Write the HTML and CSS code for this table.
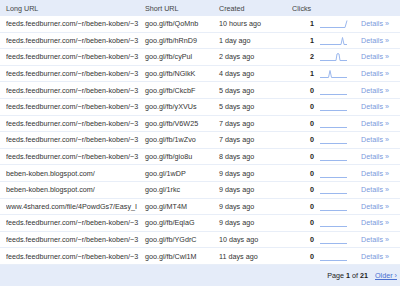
FILE: index.html
```html
<!DOCTYPE html>
<html lang="en">
<head>
    <meta charset="UTF-8">
    <title>URL history</title>
    <link rel="stylesheet" href="styles.css">
</head>
<body>
    <div class="history">
        <div class="row head">
            <span>Long URL</span>
            <span>Short URL</span>
            <span>Created</span>
            <span class="clicks">Clicks</span>
            <span></span>
            <span></span>
        </div>

        <div class="row">
            <span class="long">feeds.feedburner.com/~r/beben-koben/~3</span>
            <span>goo.gl/fb/QoMnb</span>
            <span>10 hours ago</span>
            <span class="clicks num">1</span>
            <svg class="spark" viewBox="0 0 28 8"><polyline points="0,7.5 25,7.5 27,0.5"/></svg>
            <a class="details" href="#">Details &raquo;</a>
        </div>
        <div class="row">
            <span class="long">feeds.feedburner.com/~r/beben-koben/~3</span>
            <span>goo.gl/fb/hRnD9</span>
            <span>1 day ago</span>
            <span class="clicks num">1</span>
            <svg class="spark" viewBox="0 0 28 8"><polyline points="0,7.5 21,7.5 22.5,0.5 24,7.5 27,7.5"/></svg>
            <a class="details" href="#">Details &raquo;</a>
        </div>
        <div class="row">
            <span class="long">feeds.feedburner.com/~r/beben-koben/~3</span>
            <span>goo.gl/fb/cyPul</span>
            <span>2 days ago</span>
            <span class="clicks num">2</span>
            <svg class="spark" viewBox="0 0 28 8"><polyline points="0,7.5 16,7.5 17,1 18,0.5 19,1 20,7.5 27,7.5"/></svg>
            <a class="details" href="#">Details &raquo;</a>
        </div>
        <div class="row">
            <span class="long">feeds.feedburner.com/~r/beben-koben/~3</span>
            <span>goo.gl/fb/NGlkK</span>
            <span>4 days ago</span>
            <span class="clicks num">1</span>
            <svg class="spark" viewBox="0 0 28 8"><polyline points="0,7.5 8.5,7.5 10,0.5 11.5,7.5 27,7.5"/></svg>
            <a class="details" href="#">Details &raquo;</a>
        </div>
        <div class="row">
            <span class="long">feeds.feedburner.com/~r/beben-koben/~3</span>
            <span>goo.gl/fb/CkcbF</span>
            <span>5 days ago</span>
            <span class="clicks num">0</span>
            <svg class="spark" viewBox="0 0 28 8"><polyline points="0,7.5 27,7.5"/></svg>
            <a class="details" href="#">Details &raquo;</a>
        </div>
        <div class="row">
            <span class="long">feeds.feedburner.com/~r/beben-koben/~3</span>
            <span>goo.gl/fb/yXVUs</span>
            <span>5 days ago</span>
            <span class="clicks num">0</span>
            <svg class="spark" viewBox="0 0 28 8"><polyline points="0,7.5 27,7.5"/></svg>
            <a class="details" href="#">Details &raquo;</a>
        </div>
        <div class="row">
            <span class="long">feeds.feedburner.com/~r/beben-koben/~3</span>
            <span>goo.gl/fb/V6W25</span>
            <span>7 days ago</span>
            <span class="clicks num">0</span>
            <svg class="spark" viewBox="0 0 28 8"><polyline points="0,7.5 27,7.5"/></svg>
            <a class="details" href="#">Details &raquo;</a>
        </div>
        <div class="row">
            <span class="long">feeds.feedburner.com/~r/beben-koben/~3</span>
            <span>goo.gl/fb/1wZvo</span>
            <span>7 days ago</span>
            <span class="clicks num">0</span>
            <svg class="spark" viewBox="0 0 28 8"><polyline points="0,7.5 27,7.5"/></svg>
            <a class="details" href="#">Details &raquo;</a>
        </div>
        <div class="row">
            <span class="long">feeds.feedburner.com/~r/beben-koben/~3</span>
            <span>goo.gl/fb/gio8u</span>
            <span>8 days ago</span>
            <span class="clicks num">0</span>
            <svg class="spark" viewBox="0 0 28 8"><polyline points="0,7.5 27,7.5"/></svg>
            <a class="details" href="#">Details &raquo;</a>
        </div>
        <div class="row">
            <span class="long">beben-koben.blogspot.com/</span>
            <span>goo.gl/1wDP</span>
            <span>9 days ago</span>
            <span class="clicks num">0</span>
            <svg class="spark" viewBox="0 0 28 8"><polyline points="0,7.5 27,7.5"/></svg>
            <a class="details" href="#">Details &raquo;</a>
        </div>
        <div class="row">
            <span class="long">beben-koben.blogspot.com/</span>
            <span>goo.gl/1rkc</span>
            <span>9 days ago</span>
            <span class="clicks num">0</span>
            <svg class="spark" viewBox="0 0 28 8"><polyline points="0,7.5 27,7.5"/></svg>
            <a class="details" href="#">Details &raquo;</a>
        </div>
        <div class="row">
            <span class="long">www.4shared.com/file/4PowdGs7/Easy_I</span>
            <span>goo.gl/MT4M</span>
            <span>9 days ago</span>
            <span class="clicks num">0</span>
            <svg class="spark" viewBox="0 0 28 8"><polyline points="0,7.5 27,7.5"/></svg>
            <a class="details" href="#">Details &raquo;</a>
        </div>
        <div class="row">
            <span class="long">feeds.feedburner.com/~r/beben-koben/~3</span>
            <span>goo.gl/fb/EqlaG</span>
            <span>9 days ago</span>
            <span class="clicks num">0</span>
            <svg class="spark" viewBox="0 0 28 8"><polyline points="0,7.5 27,7.5"/></svg>
            <a class="details" href="#">Details &raquo;</a>
        </div>
        <div class="row">
            <span class="long">feeds.feedburner.com/~r/beben-koben/~3</span>
            <span>goo.gl/fb/YGdrC</span>
            <span>10 days ago</span>
            <span class="clicks num">0</span>
            <svg class="spark" viewBox="0 0 28 8"><polyline points="0,7.5 27,7.5"/></svg>
            <a class="details" href="#">Details &raquo;</a>
        </div>
        <div class="row">
            <span class="long">feeds.feedburner.com/~r/beben-koben/~3</span>
            <span>goo.gl/fb/Cwl1M</span>
            <span>11 days ago</span>
            <span class="clicks num">0</span>
            <svg class="spark" viewBox="0 0 28 8"><polyline points="0,7.5 27,7.5"/></svg>
            <a class="details" href="#">Details &raquo;</a>
        </div>

        <div class="pager">
            <span>Page <b>1</b> of <b>21</b></span>
            <a href="#">Older &rsaquo;</a>
        </div>
    </div>
</body>
</html>
```

FILE: styles.css
```css
* {
    margin: 0;
    padding: 0;
    box-sizing: border-box;
}

body {
    font-family: "Liberation Sans", Arial, sans-serif;
    font-size: 7.2px;
    color: #333;
    background: #fff;
}

.history {
    width: 400px;
}

.row {
    display: grid;
    grid-template-columns: 139px 74px 73px 22px 28px 1fr;
    align-items: center;
    height: 16.6px;
    padding-left: 6px;
    border-bottom: 1px solid #e8eef8;
    white-space: nowrap;
}

.row.head {
    height: 16px;
    background: #e5ecf9;
    border-bottom: none;
    color: #444;
}

.long {
    min-width: 0;
    overflow: hidden;
    margin-right: 6px;
}

.clicks {
    text-align: right;
}

.head .clicks {
    text-align: left;
}

.num {
    font-weight: bold;
    color: #222;
}

.spark {
    width: 28px;
    height: 8px;
    margin-left: 6px;
    margin-top: 1px;
    overflow: visible;
}

.spark polyline {
    fill: none;
    stroke: #9bb8ee;
    stroke-width: 1;
}

.details {
    color: #7a99dc;
    text-decoration: none;
    padding-left: 19px;
}

.pager {
    display: flex;
    justify-content: flex-end;
    align-items: center;
    gap: 7px;
    height: 21px;
    padding-right: 3px;
    background: #e5ecf9;
    color: #222;
}

.pager a {
    color: #4a6fd0;
    text-decoration: underline;
}
```
